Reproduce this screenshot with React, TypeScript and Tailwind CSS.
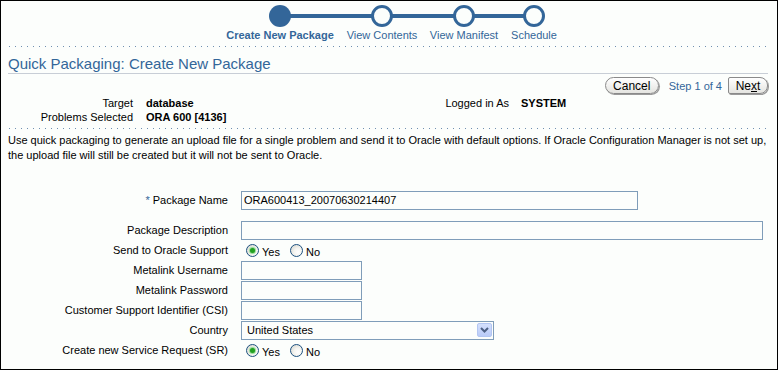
import React from "react";

const BLUE = "#336699";

function Radio({ checked }: { checked?: boolean }) {
  return (
    <span className="flex h-[13px] w-[13px] items-center justify-center rounded-full border border-[#1c5180] bg-[radial-gradient(circle_at_65%_65%,#ffffff_0%,#f4f4f0_40%,#d0d0c8_100%)]">
      {checked && <span className="h-[5px] w-[5px] rounded-full bg-[#21a121] shadow-[0_0_1px_1px_#8fd88f]" />}
    </span>
  );
}

function RadioPair() {
  return (
    <div className="flex items-center pl-[5px]">
      <Radio checked />
      <span className="ml-[3px] mt-[3px]">Yes</span>
      <span className="ml-[10px]">
        <Radio />
      </span>
      <span className="ml-[3px] mt-[3px]">No</span>
    </div>
  );
}

function Row({ label, children, req }: { label: string; children?: React.ReactNode; req?: boolean }) {
  return (
    <div className="flex h-[20px] items-center">
      <div className="w-[220px] text-right">
        {req && <span className="mr-[3px] text-[#336699]">*</span>}
        {label}
      </div>
      <div className="ml-[13px] flex items-center">{children}</div>
    </div>
  );
}

const inputCls = "h-[19px] border border-[#7f9db9] bg-[#fcfefc] px-[2px] leading-[17px]";

const Dotted = () => (
  <div className="ml-[8px] h-[1px] w-[758px] bg-[linear-gradient(to_right,#6f8fb0_1px,transparent_1px)] bg-[length:6px_1px] bg-repeat-x" />
);

export default function App() {
  return (
    <div className="h-[370px] w-[778px] overflow-hidden border border-black bg-[#fcfefc] font-['Liberation_Sans',Arial,sans-serif] text-[11px] leading-[14px] text-black">
      {/* train */}
      <svg width="776" height="22" className="mt-[4px] block">
        <line x1="279" y1="11" x2="533" y2="11" stroke={BLUE} strokeWidth="4" />
        <circle cx="279" cy="11" r="11" fill={BLUE} />
        <circle cx="381" cy="11" r="9.5" fill="#fcfefc" stroke={BLUE} strokeWidth="3" />
        <circle cx="463" cy="11" r="9.5" fill="#fcfefc" stroke={BLUE} strokeWidth="3" />
        <circle cx="533" cy="11" r="9.5" fill="#fcfefc" stroke={BLUE} strokeWidth="3" />
      </svg>
      <div className="mt-[2px] flex h-[13px] pl-[219px] leading-[13px] text-[#336699]">
        <div className="w-[120px] text-center font-bold">Create New Package</div>
        <div className="ml-[2px] w-[80px] text-center">View Contents</div>
        <div className="ml-[2px] w-[80px] text-center">View Manifest</div>
        <div className="ml-[2px] w-[56px] text-center">Schedule</div>
      </div>
      <div className="mt-[4px]">
        <Dotted />
      </div>

      <div className="pl-[7px] pr-[9px]">
        <div className="mt-[8px] h-[19px] border-b border-[#c8ced6] text-[15px] leading-[18px] text-[#336699]">
          Quick Packaging: Create New Package
        </div>

        <div className="mt-[3px] flex h-[17px] items-center justify-end">
          <div className="flex h-[17px] w-[54px] items-center justify-center rounded-full border border-[#8a8a8a] bg-[linear-gradient(#ffffff,#e4e4e0)] text-[12px] shadow-[1px_1px_0_#9a9a9a]">
            Cancel
          </div>
          <div className="ml-[10px] text-[#336699]">Step 1 of 4</div>
          <div className="ml-[6px] flex h-[17px] w-[40px] items-center justify-center rounded-l-[2px] rounded-r-[8px] border border-[#8a8a8a] bg-[linear-gradient(#ffffff,#e4e4e0)] text-[12px] shadow-[1px_1px_0_#9a9a9a]">
            Ne<span className="underline">x</span>t
          </div>
        </div>

        <div className="mt-[2px] flex">
          <div className="grid w-[420px] grid-cols-[125px_auto] gap-x-[13px]">
            <div className="text-right">Target</div>
            <div className="font-bold">database</div>
            <div className="text-right">Problems Selected</div>
            <div className="font-bold">ORA 600 [4136]</div>
          </div>
          <div className="grid grid-cols-[81px_auto] gap-x-[12px]">
            <div className="text-right">Logged in As</div>
            <div className="font-bold">SYSTEM</div>
          </div>
        </div>
      </div>

      <div className="mt-[4px]">
        <Dotted />
      </div>

      <div className="mt-[4px] pl-[7px] pr-[9px] leading-[15px]">
        Use quick packaging to generate an upload file for a single problem and send it to Oracle with default options. If Oracle Configuration Manager is not set up,
        <br />
        the upload file will still be created but it will not be sent to Oracle.
      </div>

      <div className="mt-[27px] pl-[7px]">
        <Row label="Package Name" req>
          <div className={`${inputCls} w-[397px]`}>ORA600413_20070630214407</div>
        </Row>
        <div className="h-[10px]" />
        <Row label="Package Description">
          <div className={`${inputCls} w-[522px]`} />
        </Row>
        <Row label="Send to Oracle Support">
          <RadioPair />
        </Row>
        <Row label="Metalink Username">
          <div className={`${inputCls} w-[121px]`} />
        </Row>
        <Row label="Metalink Password">
          <div className={`${inputCls} w-[121px]`} />
        </Row>
        <Row label="Customer Support Identifier (CSI)">
          <div className={`${inputCls} w-[121px]`} />
        </Row>
        <Row label="Country">
          <div className="flex h-[19px] w-[253px] items-center justify-between border border-[#7f9db9] bg-[#fcfefc] pl-[5px] pr-[1px]">
            <span>United States</span>
            <span className="flex h-[14px] w-[15px] items-center justify-center rounded-[2px] border border-[#b3c6f2] bg-[linear-gradient(#d4e0fd,#b9cbf8)]">
              <svg width="9" height="6" viewBox="0 0 9 6">
                <path d="M1 1 L4.5 4.5 L8 1" fill="none" stroke="#4d6185" strokeWidth="2" />
              </svg>
            </span>
          </div>
        </Row>
        <Row label="Create new Service Request (SR)">
          <RadioPair />
        </Row>
      </div>
    </div>
  );
}
